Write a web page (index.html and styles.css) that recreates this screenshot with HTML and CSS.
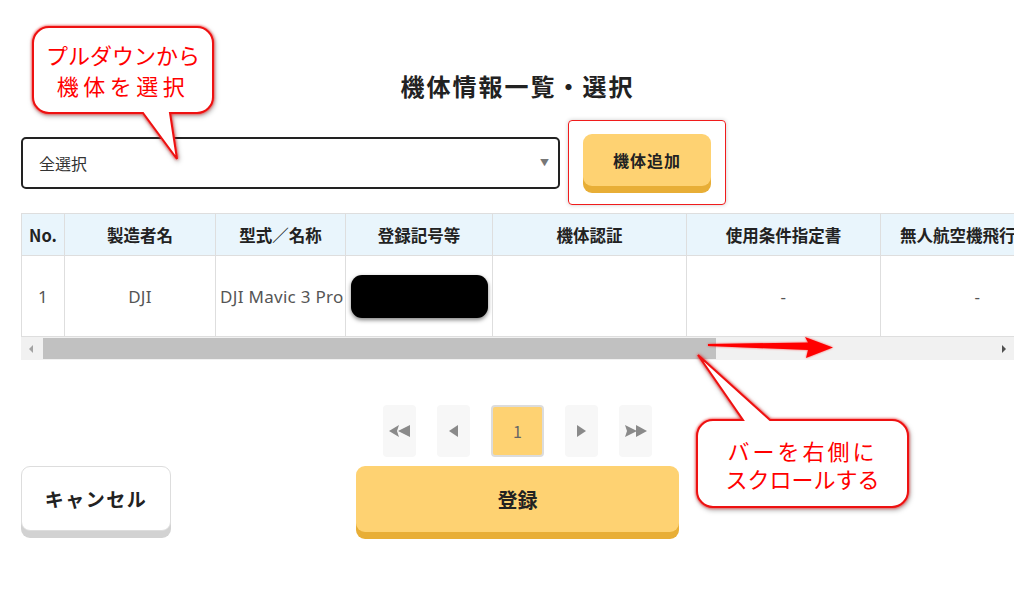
FILE: index.html
```html
<!DOCTYPE html>
<html lang="ja">

<head>
    <meta charset="UTF-8">
    <title>機体情報一覧・選択</title>
    <link rel="stylesheet" href="styles.css">
</head>

<body>
    <main class="page">
        <h1>機体情報一覧・選択</h1>

        <div class="toolbar">
            <div class="select">
                <span>全選択</span>
                <span class="caret">▼</span>
            </div>
            <div class="frame">
                <button class="btn btn-yellow btn-add">機体追加</button>
            </div>
        </div>

        <div class="table-wrap">
            <table>
                <colgroup>
                    <col style="width:43px">
                    <col style="width:151px">
                    <col style="width:130px">
                    <col style="width:147px">
                    <col style="width:194px">
                    <col style="width:194px">
                    <col style="width:194px">
                    <col style="width:194px">
                </colgroup>
                <thead>
                    <tr>
                        <th>No.</th>
                        <th>製造者名</th>
                        <th>型式／名称</th>
                        <th>登録記号等</th>
                        <th>機体認証</th>
                        <th>使用条件指定書</th>
                        <th class="long">無人航空機飛行マニュアル</th>
                        <th>備考</th>
                    </tr>
                </thead>
                <tbody>
                    <tr>
                        <td>1</td>
                        <td>DJI</td>
                        <td class="model">DJI Mavic 3 Pro</td>
                        <td><span class="redact"></span></td>
                        <td></td>
                        <td>-</td>
                        <td>-</td>
                        <td>-</td>
                    </tr>
                </tbody>
            </table>
            <div class="scrollbar">
                <span class="sb-arrow sb-left"></span>
                <span class="sb-thumb"></span>
                <span class="sb-rest"></span>
                <span class="sb-arrow sb-right"></span>
            </div>
        </div>

        <nav class="pager">
            <a class="page-btn">
                <svg width="22" height="12" viewBox="0 0 22 12"><polygon points="0,6 10,0 8,6 10,12" /><polygon points="9,6 21,0 21,12" /></svg>
            </a>
            <a class="page-btn">
                <svg width="9" height="12" viewBox="0 0 9 12"><polygon points="0,6 9,0 9,12" /></svg>
            </a>
            <a class="page-btn current">1</a>
            <a class="page-btn">
                <svg width="9" height="12" viewBox="0 0 9 12"><polygon points="9,6 0,0 0,12" /></svg>
            </a>
            <a class="page-btn">
                <svg width="22" height="12" viewBox="0 0 22 12"><polygon points="0,0 12,6 0,12 2,6" /><polygon points="11,0 22,6 11,12" /></svg>
            </a>
        </nav>

        <div class="actions">
            <button class="btn btn-white btn-cancel">キャンセル</button>
            <button class="btn btn-yellow btn-submit">登録</button>
        </div>
    </main>

    <!-- 注釈 -->
    <div class="callout callout-1">
        <svg class="bubble" width="180" height="86">
            <path d="M16,0 H164 A16,16 0 0 1 180,16 V70 A16,16 0 0 1 164,86 H137 L144,132 L110,86 H16 A16,16 0 0 1 0,70 V16 A16,16 0 0 1 16,0 Z" />
        </svg>
        <p>プルダウンから<br><span class="wider">機体を選択</span></p>
    </div>

    <div class="callout callout-2">
        <svg class="bubble" width="211" height="87">
            <path d="M16,0 H46 L1,-65 L73,0 H195 A16,16 0 0 1 211,16 V71 A16,16 0 0 1 195,87 H16 A16,16 0 0 1 0,71 V16 A16,16 0 0 1 16,0 Z" />
        </svg>
        <p><span class="wide">バーを右側に</span><br>スクロールする</p>
    </div>

    <svg class="arrow" width="140" height="30" viewBox="0 0 140 30">
        <polygon points="8,12 108,10.5 105,5 133,15.5 106,26 108,18 8,14" />
    </svg>
</body>

</html>
```

FILE: styles.css
```css
body {
    margin: 0;
    background-color: white;
    font-family: "Noto Sans CJK JP", "Noto Sans", sans-serif;
    color: #222;
}

.page {
    width: 993px;
    padding: 70px 0 56px 21px;
}

h1 {
    margin: 0;
    text-align: center;
    font-size: 24px;
    line-height: 32px;
    font-weight: 700;
    letter-spacing: 2px;
    color: #222;
}

/* プルダウン + 追加ボタン */
.toolbar {
    display: flex;
    align-items: center;
    gap: 8px;
    margin-top: 18px;
}

.select {
    box-sizing: border-box;
    width: 539px;
    height: 52px;
    border: 2px solid #222;
    border-radius: 5px;
    display: flex;
    align-items: center;
    justify-content: space-between;
    padding: 0 9px 0 16px;
    font-size: 16px;
    color: #333;
}

.caret {
    font-size: 9px;
    color: #777;
}

.frame {
    border: 1.5px solid #f01c1c;
    border-radius: 4px;
    padding: 13px 14px 11px;
    box-shadow: 0 0 4px rgba(0, 0, 0, 0.2);
}

.btn {
    border: 0;
    font-family: inherit;
    font-weight: 700;
    color: #222;
    cursor: pointer;
    display: block;
}

.btn-yellow {
    background-color: #fed272;
    border-radius: 9px;
    box-shadow: 0 7px 0 #e8ae36;
}

.btn-white {
    background-color: white;
    border: 1px solid #ddd;
    border-radius: 9px;
    box-shadow: 0 7px 0 #d2d2d2;
}

.btn-add {
    width: 128px;
    height: 52px;
    margin-bottom: 7px;
    font-size: 16px;
    letter-spacing: 1px;
}

/* テーブル */
.table-wrap {
    margin-top: 8px;
    width: 993px;
    overflow: hidden;
}

table {
    table-layout: fixed;
    width: 1247px;
    border-collapse: collapse;
}

th,
td {
    border: 1px solid #dedede;
    text-align: center;
    white-space: nowrap;
    overflow: hidden;
    padding: 0 4px;
}

th {
    height: 41px;
    background-color: #e9f5fc;
    font-size: 16.5px;
    font-weight: 700;
    color: #222;
}

th.long {
    padding-left: 19px;
}

td {
    height: 80px;
    font-family: "Noto Sans", "Noto Sans CJK JP", sans-serif;
    font-size: 17px;
    letter-spacing: 0.3px;
    color: #555;
}

.model {
    overflow: visible;
}

.redact {
    display: inline-block;
    width: 137px;
    height: 43px;
    background-color: black;
    border-radius: 11px;
    box-shadow: 0 2px 4px rgba(0, 0, 0, 0.5);
    vertical-align: middle;
}

.scrollbar {
    display: flex;
    height: 23px;
    background-color: #f1f1f1;
}

.sb-arrow {
    width: 22px;
    position: relative;
}

.sb-arrow::before {
    content: "";
    position: absolute;
    top: 8px;
    border-top: 4px solid transparent;
    border-bottom: 4px solid transparent;
}

.sb-left::before {
    left: 8px;
    border-right: 4px solid #a3a3a3;
}

.sb-right::before {
    left: 10px;
    border-left: 4px solid #505050;
}

.sb-thumb {
    width: 673px;
    margin: 1px 0;
    background-color: #c1c1c1;
}

.sb-rest {
    flex: 1;
}

/* ページ送り */
.pager {
    display: flex;
    justify-content: center;
    gap: 21px;
    margin-top: 45px;
}

.page-btn {
    box-sizing: border-box;
    width: 33px;
    height: 52px;
    border-radius: 4px;
    background-color: #f7f7f7;
    display: flex;
    align-items: center;
    justify-content: center;
    fill: #8a8a8a;
}

.page-btn.current {
    width: 53px;
    background-color: #fed272;
    border: 2px solid #dcdcdc;
    font-size: 16px;
    color: #666;
}

/* ボタン */
.actions {
    display: grid;
    grid-template-columns: 1fr 323px 1fr;
    align-items: start;
    margin-top: 9px;
}

.btn-cancel {
    width: 150px;
    height: 65px;
    font-size: 19px;
    letter-spacing: 1.5px;
}

.btn-submit {
    width: 323px;
    height: 66px;
    font-size: 20px;
}

/* 吹き出し */
.callout {
    position: absolute;
    display: flex;
    align-items: center;
    justify-content: center;
    color: #ff0000;
    font-size: 22px;
    text-align: center;
}

.callout p {
    position: relative;
    margin: 0;
}

.bubble {
    position: absolute;
    left: 0;
    top: 0;
    overflow: visible;
    fill: white;
    stroke: #ee1111;
    stroke-width: 2;
    filter: drop-shadow(0 0 1.5px #ff2020) drop-shadow(1px 2px 2px rgba(0, 0, 0, 0.3));
}

.callout-1 {
    left: 33px;
    top: 27px;
    width: 180px;
    height: 86px;
    line-height: 31px;
}

.callout-2 {
    left: 697px;
    top: 420px;
    width: 211px;
    height: 87px;
    line-height: 28px;
}

.wide {
    letter-spacing: 3px;
}

.wider {
    letter-spacing: 4.5px;
}

.arrow {
    position: absolute;
    left: 700px;
    top: 332px;
    fill: #ff0000;
    filter: drop-shadow(0 0 1px rgba(255, 0, 0, 0.6));
}
```
